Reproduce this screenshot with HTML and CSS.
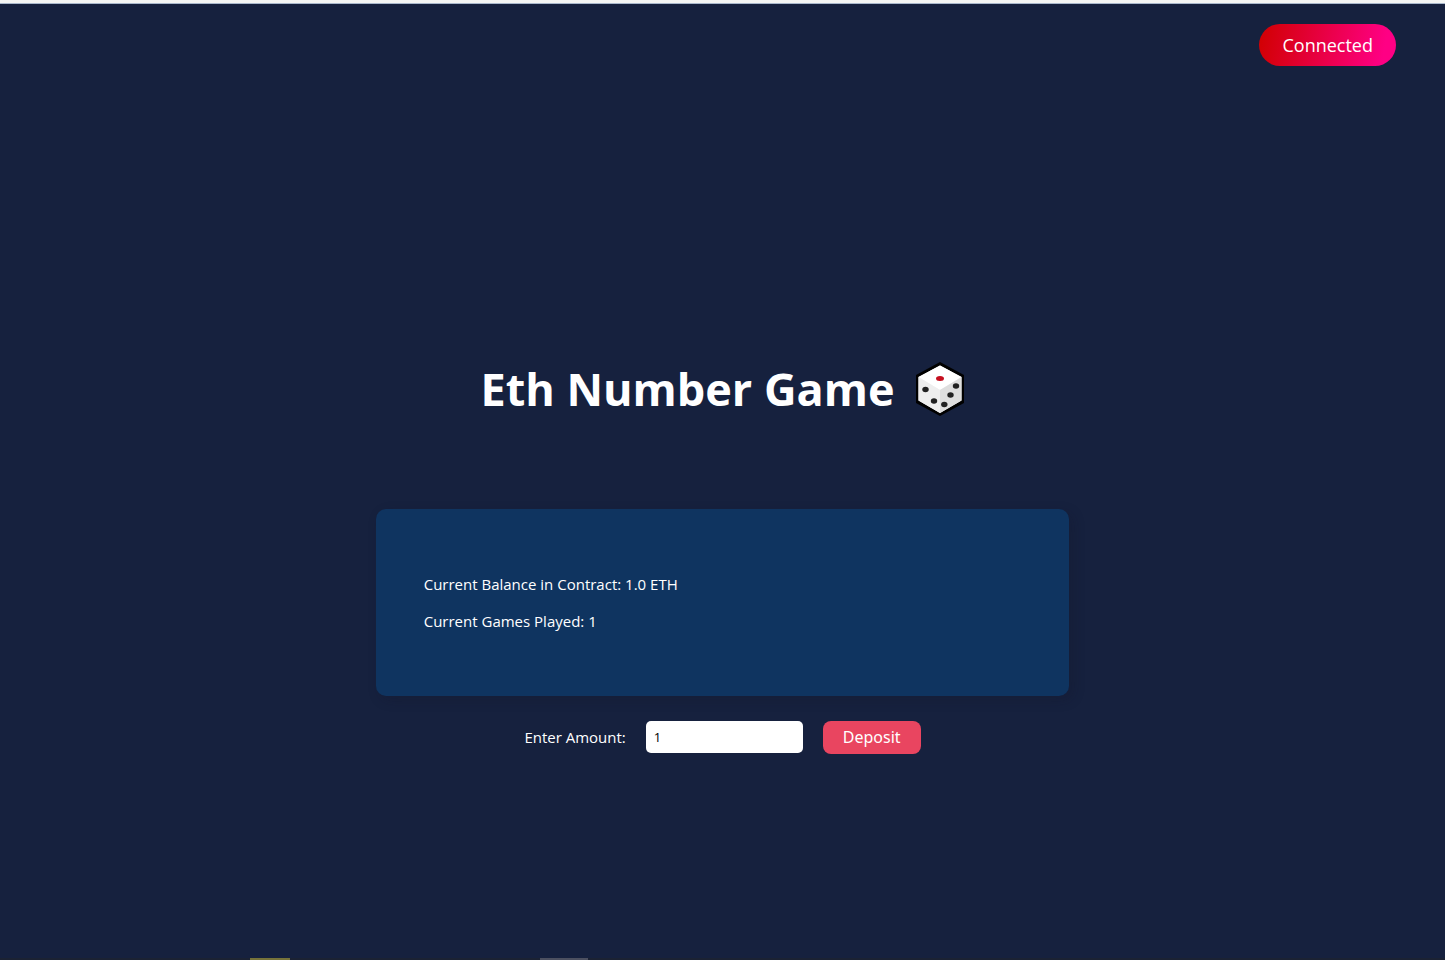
FILE: index.html
```html
<!DOCTYPE html>
<html lang="en">
<head>
<meta charset="utf-8">
<title>Eth Number Game</title>
<link rel="stylesheet" href="styles.css">
</head>
<body>
<header class="topbar">
  <button class="connect" type="button">Connected</button>
</header>
<main class="game">
  <h1 class="title">
    <span>Eth Number Game</span>
    <svg class="die" viewBox="0 0 50 54" role="img" aria-label="Die">
      <path d="M25 0 L49 13 V41 L25 54 L1 41 V13 Z" fill="#000"/>
      <path d="M25 3.5 L46.5 15 L46.5 38.5 L25 51 L3.5 38.5 V15 Z" fill="#f4f4f4"/>
      <path d="M25 3.5 L46.5 15 L25 28 L3.5 15 Z" fill="#fff"/>
      <path d="M3.5 15 L25 28 V51 L3.5 38.5 Z" fill="#eee"/>
      <path d="M46.5 15 L25 28 V51 L46.5 38.5 Z" fill="#dedede"/>
      <ellipse cx="25" cy="16.5" rx="4" ry="2.5" fill="#c50f1f"/>
      <g fill="#212121">
        <ellipse cx="10.5" cy="27.5" rx="3.2" ry="2.8"/>
        <ellipse cx="19" cy="39" rx="3.2" ry="2.8"/>
        <ellipse cx="41" cy="24" rx="3.2" ry="2.8"/>
        <ellipse cx="35.5" cy="33" rx="3.2" ry="2.8"/>
        <ellipse cx="29.3" cy="42.5" rx="3.2" ry="2.8"/>
      </g>
    </svg>
  </h1>
  <section class="card">
    <p>Current Balance in Contract: 1.0 ETH</p>
    <p>Current Games Played: 1</p>
  </section>
  <form class="deposit">
    <label for="amount">Enter Amount:</label>
    <input id="amount" class="amount" type="text" value="1">
    <button class="submit" type="button">Deposit</button>
  </form>
</main>
<footer class="edge"><span class="mark"></span><span class="mark mark-grey"></span></footer>
</body>
</html>
```
FILE: styles.css
```css
* {
  box-sizing: border-box;
}

body {
  margin: 0;
  min-height: 100vh;
  display: flex;
  flex-direction: column;
  border-top: 3px solid #f4f6f4;
  background: #16213e;
  color: #fff;
  font: 15px/22px "Open Sans", "Noto Sans", sans-serif;
}

.topbar {
  display: flex;
  justify-content: flex-end;
  padding: 20px 49px 0;
  border-top: 1px solid #a9b8cc;
}

.connect {
  height: 42px;
  padding: 0 23px;
  border: 0;
  border-radius: 21px;
  background: linear-gradient(100deg, #d10000, #ff0084 90%);
  color: #fff;
  font: 18px/24px "Open Sans", sans-serif;
}

.game {
  flex: 1;
  display: flex;
  flex-direction: column;
  align-items: center;
  justify-content: center;
  padding-bottom: 96px;
  padding-top: 182px;
}

.title {
  display: flex;
  align-items: center;
  gap: 20px;
  margin: 0 0 88px;
  font-size: 45px;
  line-height: 64px;
}

.die {
  width: 50px;
  height: 54px;
}

.card {
  width: 48%;
  padding: 64px 48px;
  border-radius: 10px;
  background: #0f3460;
  box-shadow: 4px 4px 12px rgba(20, 20, 40, 0.25);
}

.card p {
  margin: 0;
}

.card p + p {
  margin-top: 15px;
}

.deposit {
  display: flex;
  align-items: center;
  gap: 20px;
  margin-top: 25px;
}

.amount {
  width: 157px;
  height: 32px;
  padding: 0 8px;
  border: 0;
  border-radius: 5px;
  background: #fff;
  color: #000;
  font: 13px/18px "Open Sans", sans-serif;
}

.submit {
  height: 33px;
  padding: 0 20px;
  border: 0;
  border-radius: 8px;
  background: #e94560;
  color: #fff;
  font: 16px/22px "Noto Sans", sans-serif;
}

.edge {
  display: flex;
  gap: 250px;
  height: 2px;
  padding-left: 250px;
  background: #1b2233;
}

.mark {
  width: 40px;
  background: #77733a;
}

.mark-grey {
  width: 48px;
  background: #4c5060;
}
```
